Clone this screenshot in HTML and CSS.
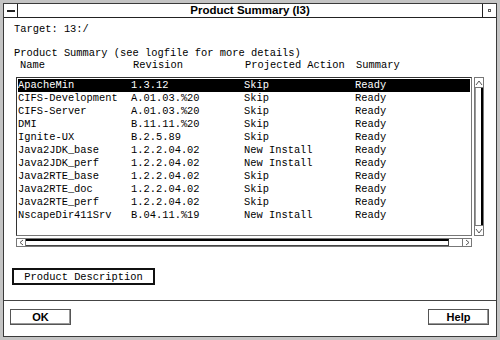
FILE: index.html
```html
<!DOCTYPE html>
<html lang="en">
<head>
    <meta charset="UTF-8">
    <title>Product Summary (I3)</title>
    <link rel="stylesheet" href="styles.css">
</head>
<body>
    <div class="window">
        <div class="frame">
            <div class="titlebar">
                <div class="menu-box"><span class="menu-bar"></span></div>
                <div class="title">Product Summary (I3)</div>
                <div class="max-box"><span class="max-dot"></span></div>
            </div>

            <div class="content">
                <div class="target">Target: 13:/</div>
                <div class="heading">Product Summary (see logfile for more details)</div>
                <div class="header-row">
                    <span class="col-name">Name</span>
                    <span class="col-rev">Revision</span>
                    <span class="col-action">Projected Action</span>
                    <span class="col-sum">Summary</span>
                </div>

                <div class="list-area">
                    <div class="list" id="list">
                        <!-- rows go here -->
                    </div>
                    <div class="vscroll">
                        <div class="arrow-box">
                            <svg width="8" height="8" viewBox="0 0 8 8"><path d="M1 6 L4 2 L7 6" fill="none" stroke="#555" stroke-width="1"/></svg>
                        </div>
                        <div class="vthumb"></div>
                        <div class="arrow-box">
                            <svg width="8" height="8" viewBox="0 0 8 8"><path d="M1 2 L4 6 L7 2" fill="none" stroke="#555" stroke-width="1"/></svg>
                        </div>
                    </div>
                </div>

                <div class="hscroll">
                    <div class="arrow-box h">
                        <svg width="7" height="7" viewBox="0 0 7 7"><path d="M5 1 L2 3.5 L5 6" fill="none" stroke="#555" stroke-width="1"/></svg>
                    </div>
                    <div class="hthumb"></div>
                    <div class="htrough"></div>
                    <div class="arrow-box h">
                        <svg width="7" height="7" viewBox="0 0 7 7"><path d="M2 1 L5 3.5 L2 6" fill="none" stroke="#555" stroke-width="1"/></svg>
                    </div>
                </div>

                <button class="desc-btn">Product Description</button>
            </div>

            <div class="actions">
                <button class="btn">OK</button>
                <button class="btn">Help</button>
            </div>
        </div>
    </div>

    <script>
        const products = [
            ["ApacheMin", "1.3.12", "Skip", "Ready"],
            ["CIFS-Development", "A.01.03.%20", "Skip", "Ready"],
            ["CIFS-Server", "A.01.03.%20", "Skip", "Ready"],
            ["DMI", "B.11.11.%20", "Skip", "Ready"],
            ["Ignite-UX", "B.2.5.89", "Skip", "Ready"],
            ["Java2JDK_base", "1.2.2.04.02", "New Install", "Ready"],
            ["Java2JDK_perf", "1.2.2.04.02", "New Install", "Ready"],
            ["Java2RTE_base", "1.2.2.04.02", "Skip", "Ready"],
            ["Java2RTE_doc", "1.2.2.04.02", "Skip", "Ready"],
            ["Java2RTE_perf", "1.2.2.04.02", "Skip", "Ready"],
            ["NscapeDir411Srv", "B.04.11.%19", "New Install", "Ready"]
        ];

        document.getElementById("list").innerHTML = products.map((p, i) => `
            <div class="row${i === 0 ? ' selected' : ''}">
                <span class="col-name">${p[0]}</span>
                <span class="col-rev">${p[1]}</span>
                <span class="col-action">${p[2]}</span>
                <span class="col-sum">${p[3]}</span>
            </div>
        `).join('');
    </script>
</body>
</html>
```

FILE: styles.css
```css
body {
    margin: 0;
    font-family: "Liberation Mono", monospace;
    font-size: 10.4px;
    color: #000;
}
.window {
    width: 500px;
    height: 340px;
    box-sizing: border-box;
    padding: 3px;
    background: #c4c4c4;
}
.frame {
    height: 100%;
    box-sizing: border-box;
    border: 1px solid #3a3a3a;
    background: #fff;
    display: flex;
    flex-direction: column;
}
.titlebar {
    display: flex;
    height: 13px;
    border-bottom: 1px solid #222;
}
.menu-box, .max-box {
    width: 13px;
    display: flex;
    align-items: center;
    justify-content: center;
}
.menu-box {
    border-right: 1px solid #222;
}
.max-box {
    border-left: 1px solid #222;
}
.menu-bar {
    width: 8px;
    height: 2px;
    border: 1px solid #222;
    box-sizing: border-box;
}
.max-dot {
    width: 3px;
    height: 3px;
    border: 1px solid #555;
    box-sizing: border-box;
}
.title {
    flex: 1;
    text-align: center;
    font-family: "Liberation Sans", Arial, sans-serif;
    font-weight: bold;
    font-size: 11.5px;
    line-height: 13px;
}
.content {
    flex: 1;
    padding: 0 10px;
}
.target {
    margin-top: 5px;
    line-height: 12px;
}
.heading {
    margin-top: 12px;
    line-height: 12px;
}
.header-row {
    display: flex;
    line-height: 12px;
    padding-left: 6px;
}
.header-row .col-name { width: 113px; }
.header-row .col-rev { width: 112px; }
.header-row .col-action { width: 111px; }

.list-area {
    display: flex;
    margin-top: 6px;
    margin-left: 2px;
}
.list {
    width: 456px;
    height: 159px;
    box-sizing: border-box;
    border: 1px solid #333;
    border-right-color: #777;
    border-bottom-color: #777;
    padding: 1px;
}
.row {
    display: flex;
    height: 13px;
    line-height: 13px;
    white-space: nowrap;
}
.row .col-name { width: 113px; }
.row .col-rev { width: 113px; }
.row .col-action { width: 111px; }
.row.selected {
    background: #000;
    color: #fff;
}
.vscroll {
    margin-left: 2px;
    width: 10px;
    height: 159px;
    box-sizing: border-box;
    border: 1px solid #777;
    display: flex;
    flex-direction: column;
}
.arrow-box {
    height: 9px;
    display: flex;
    align-items: center;
    justify-content: center;
    border-bottom: 1px solid #777;
}
.arrow-box:last-child {
    border-bottom: none;
    border-top: 1px solid #777;
}
.vthumb {
    flex: 1;
    border-left: 1px solid #999;
    border-right: 2px solid #000;
}
.hscroll {
    display: flex;
    margin-top: 2px;
    margin-left: 2px;
    width: 456px;
    height: 9px;
    box-sizing: border-box;
    border: 1px solid #777;
}
.arrow-box.h {
    height: auto;
    width: 8px;
    border: none;
    border-right: 1px solid #777;
}
.arrow-box.h:last-child {
    border-right: none;
    border-left: 1px solid #777;
}
.hthumb {
    width: 423px;
    box-sizing: border-box;
    border-top: 2px solid #000;
    border-bottom: 1px solid #444;
    border-right: 1px solid #444;
}
.htrough {
    flex: 1;
}
.desc-btn {
    display: block;
    margin: 21px 0 0 -2px;
    width: 143px;
    height: 17px;
    padding: 0;
    border: 2px solid #111;
    background: #fff;
    font-family: "Liberation Mono", monospace;
    font-size: 10.4px;
    color: #000;
}
.actions {
    display: flex;
    justify-content: space-between;
    border-top: 1px solid #444;
    padding: 8px 7px 11px 6px;
}
.btn {
    width: 61px;
    height: 16px;
    padding: 0;
    border: 1px solid #555;
    box-shadow: inset -1px -1px 0 #999;
    background: #fff;
    font-family: "Liberation Sans", Arial, sans-serif;
    font-weight: bold;
    font-size: 11px;
    color: #000;
}
```
